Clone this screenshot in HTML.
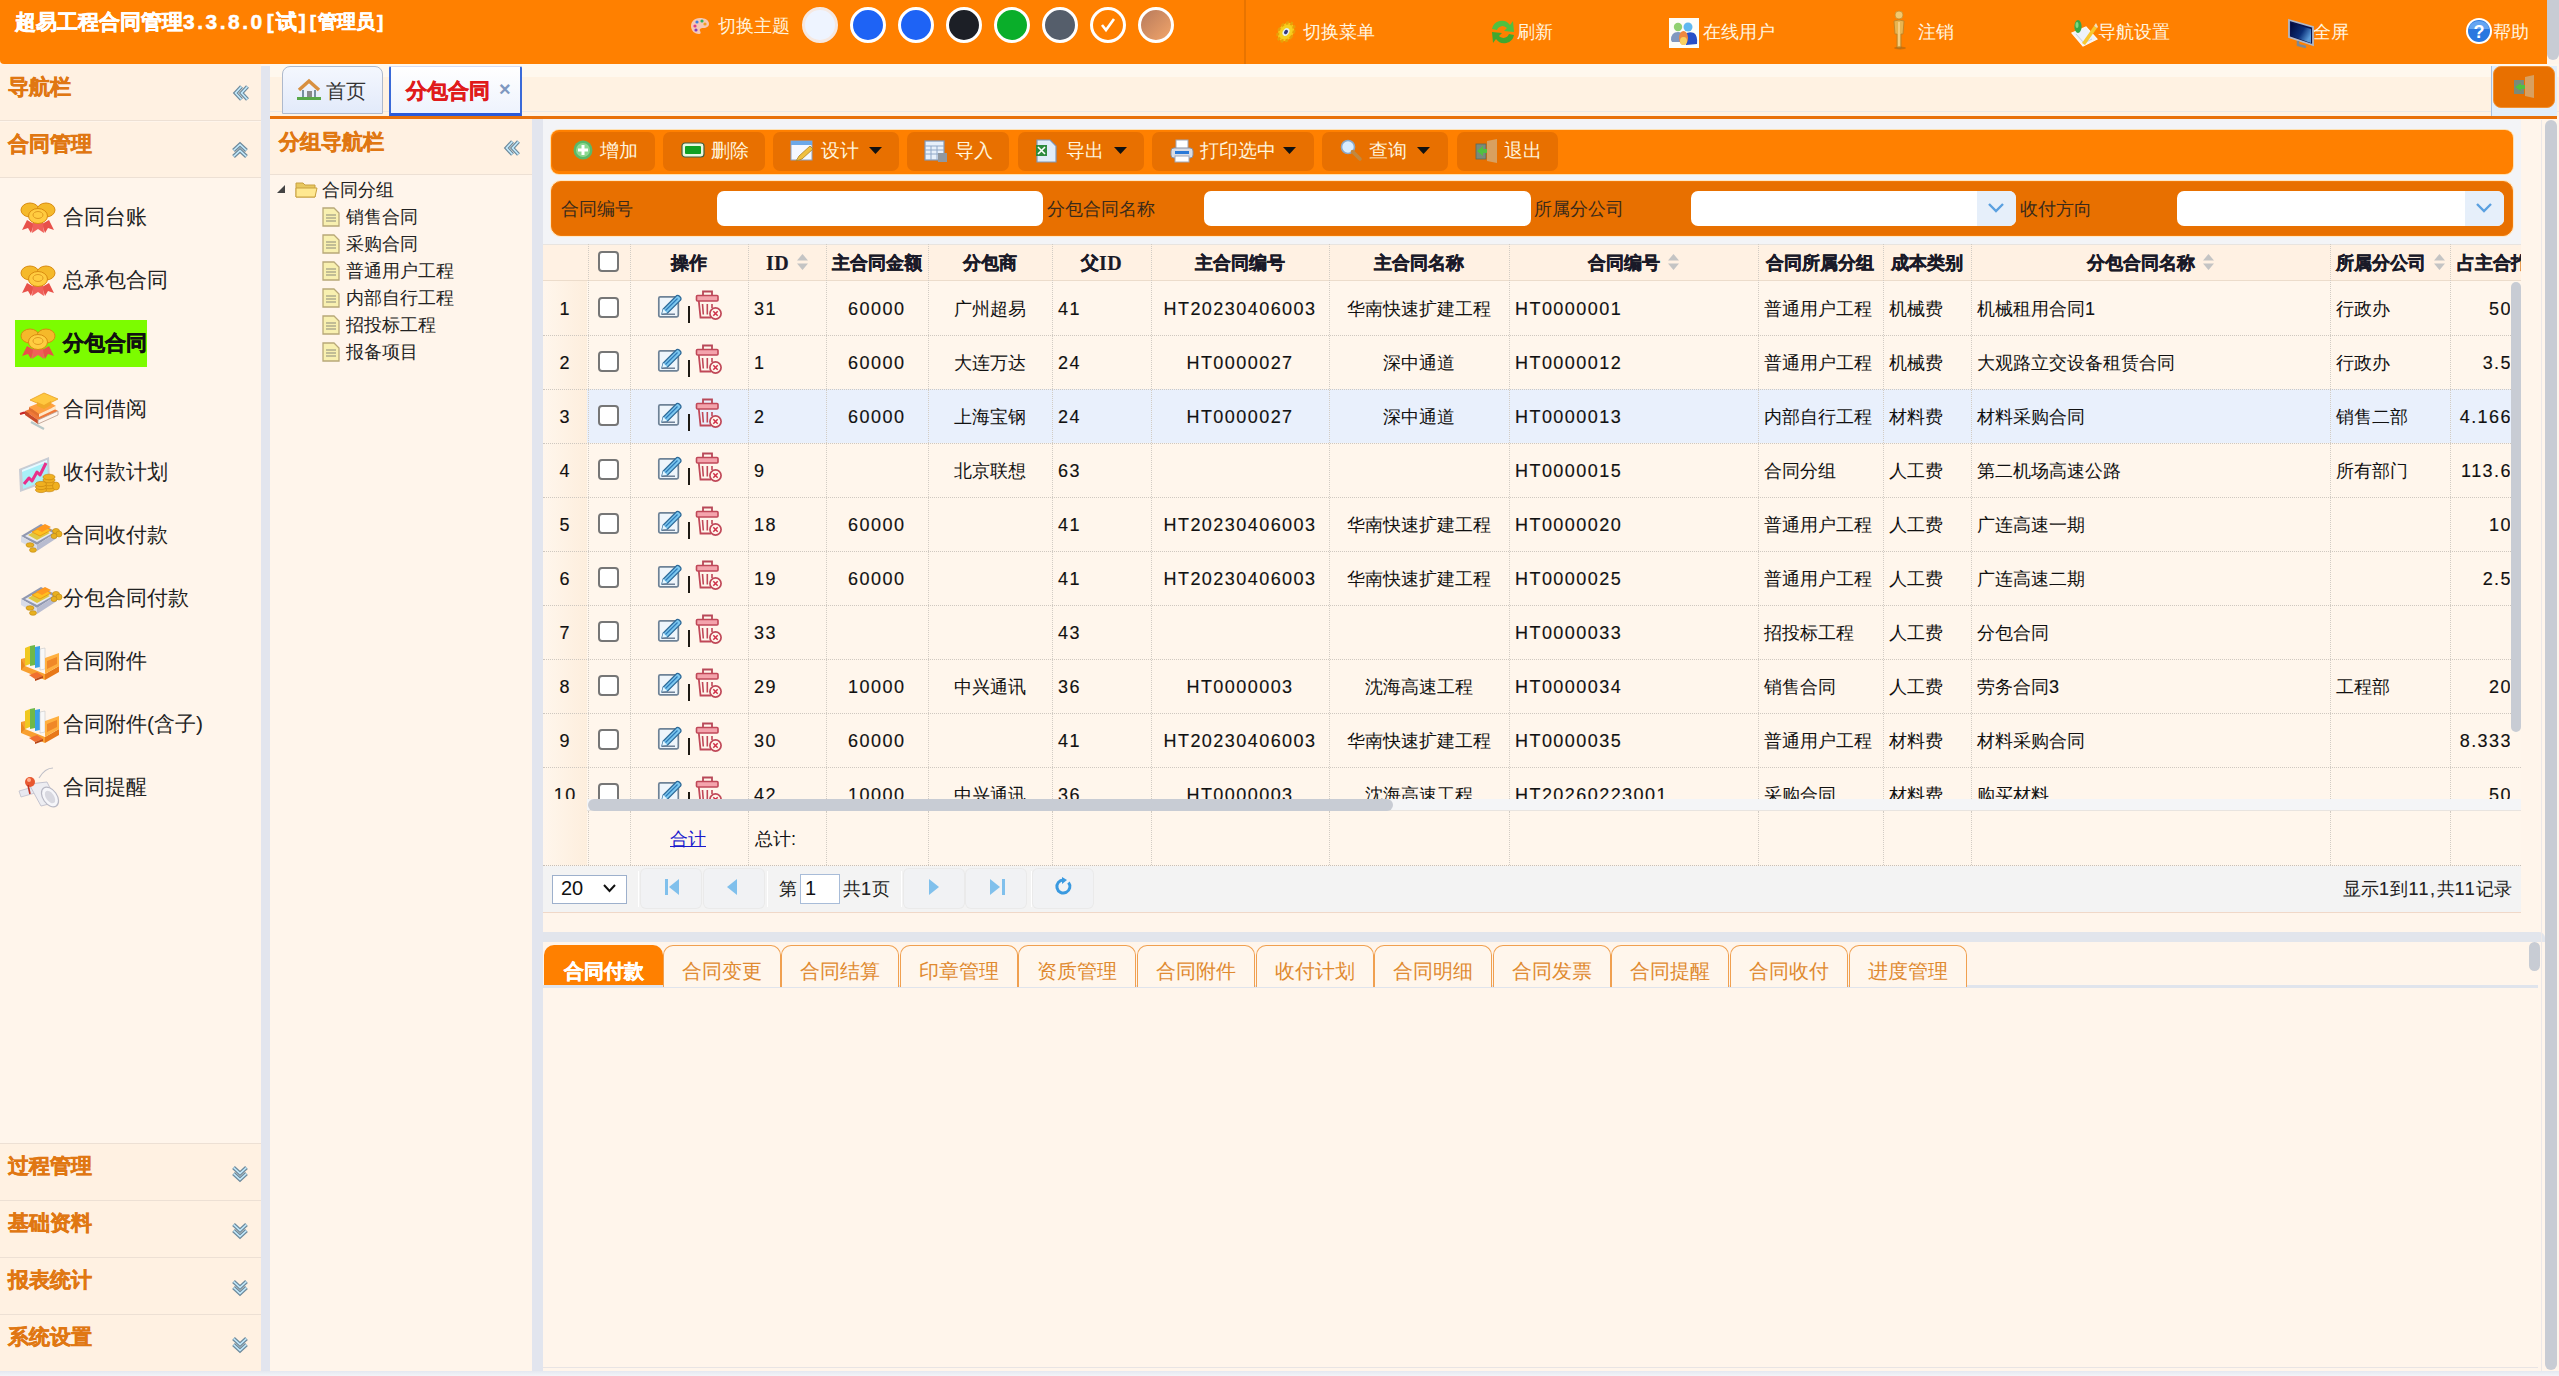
<!DOCTYPE html>
<html><head><meta charset="utf-8">
<style>
*{box-sizing:border-box}
html,body{margin:0;padding:0}
body{width:2559px;height:1376px;overflow:hidden;position:relative;background:#FFF5EB;font-family:"Liberation Sans",sans-serif;font-size:18px;color:#222}
.a{position:absolute}
svg.a{overflow:visible}
#hdr{left:0;top:0;width:2547px;height:64px;background:#FF8000;border-bottom-left-radius:4px}
.title{left:15px;top:8px;color:#fff;font-weight:bold;font-size:21px;white-space:nowrap;-webkit-text-stroke:0.5px #fff}
.title .d{letter-spacing:2.5px}
.title .bk{padding:0 2px}
.title small{font-size:19px;font-weight:bold;position:relative;top:-1px}
.theme{color:#FFF3DD;font-size:18px;white-space:nowrap}
.dot{width:36px;height:36px;border-radius:50%;border:3px solid #fff;top:7px}
.mi{color:#FFF6E0;font-size:18px;top:20px;white-space:nowrap}
.sb{background:#C8CCD4;border-radius:6px}
.split{background:#E2E5EE}
.navh{color:#E07712;font-weight:bold;font-size:21px;white-space:nowrap;-webkit-text-stroke:0.5px #E07712}
.item{font-size:21px;color:#222;white-space:nowrap}
.chk{width:21px;height:21px;border:2px solid #767676;border-radius:4px;background:#fff}
.hd{font-size:18px;font-weight:bold;color:#1A1A28;white-space:nowrap;-webkit-text-stroke:0.4px #1A1A28}
.hd .n{font-family:"Liberation Serif",serif;font-size:20px;letter-spacing:0.5px;position:relative;top:1px}
.td{font-size:18px;color:#111;white-space:nowrap;line-height:22px}
.n{letter-spacing:1.45px;-webkit-text-stroke:0.15px currentColor}
.sort{display:inline-block;margin-left:8px;vertical-align:-1px}

</style></head><body>
<div id="hdr" class="a">
<div class="a title">超易工程合同管理<span class="d">3.3.8.0</span><span class="bk">[</span>试<span class="bk">]</span><small><span class="bk">[</span>管理员<span class="bk">]</span></small></div>
<svg class="a" style="left:690px;top:17px" width="20" height="18" viewBox="0 0 20 18"><path d="M10 1 C4 1 1 5 1 9 C1 14 5 17 9 17 C11 17 11 15 10 14 C9 12 11 11 13 11 C17 11 19 9 19 7 C19 3 15 1 10 1 Z" fill="#F5C9B8"/><circle cx="5" cy="9" r="1.6" fill="#E04080"/><circle cx="7" cy="5" r="1.6" fill="#4080E0"/><circle cx="12" cy="4" r="1.6" fill="#30B060"/><circle cx="15" cy="7" r="1.6" fill="#F0A020"/><circle cx="6" cy="13" r="1.6" fill="#8040C0"/></svg>
<div class="a theme" style="left:718px;top:14px">切换主题</div>
<div class="a dot" style="left:802px;background:#EEF4FF;border-color:#F6E8E0;"></div>
<div class="a dot" style="left:850px;background:#1E63F5;"></div>
<div class="a dot" style="left:898px;background:#1E63F5;"></div>
<div class="a dot" style="left:946px;background:#1C1F26;"></div>
<div class="a dot" style="left:994px;background:#0AAE2A;"></div>
<div class="a dot" style="left:1042px;background:#555E6B;"></div>
<div class="a dot" style="left:1090px;background:#FF8000;"></div>
<div class="a dot" style="left:1138px;background:linear-gradient(135deg,#B77A5C,#F2A56A);"></div>
<svg class="a" style="left:1096px;top:13px" width="24" height="24" viewBox="0 0 24 24"><path d="M6 12 L10 17 L18 6" fill="none" stroke="#fff" stroke-width="2.6"/></svg>
<div class="a" style="left:1244px;top:0;width:2px;height:64px;background:#E87400"></div>
<div class="a mi" style="left:1303px">切换菜单</div>
<svg class="a" style="left:1272px;top:17px" width="28" height="30" viewBox="0 0 28 30"><g transform="translate(14 15) rotate(35) scale(0.72 1)"><circle r="10" fill="#F8C818" stroke="#E8A008" stroke-width="3.5" stroke-dasharray="3.2 2.4"/><circle r="7.5" fill="#F5D020"/><ellipse r="5" fill="#C8D020"/><circle r="4.2" fill="#E8F0F0"/><circle r="2.4" fill="#303880"/></g></svg>
<div class="a mi" style="left:1517px">刷新</div>
<svg class="a" style="left:1488px;top:17px" width="30" height="30" viewBox="0 0 30 30"><path d="M4 12 A10 10 0 0 1 22 8 L25 4 L26 15 L16 14 L19 11 A6 6 0 0 0 9 13 Z" fill="#50C040"/><path d="M26 18 A10 10 0 0 1 8 22 L5 26 L4 15 L14 16 L11 19 A6 6 0 0 0 21 17 Z" fill="#40A830"/></svg>
<div class="a mi" style="left:1703px">在线用户</div>
<svg class="a" style="left:1669px;top:18px" width="30" height="30" viewBox="0 0 30 30"><rect x="0" y="0" width="30" height="30" fill="#FDFDF8"/><circle cx="9" cy="9" r="4.2" fill="#90D070"/><path d="M2 22 Q2 14 9 14 Q13 14 14 17 L13 24 L3 24 Z" fill="#8098C0"/><circle cx="19" cy="9" r="4.5" fill="#60B8F0"/><path d="M16 16 Q20 13 25 15 Q29 18 28 26 L17 27 Z" fill="#2850C8"/><ellipse cx="14.5" cy="20" rx="4.5" ry="7" fill="#F08840"/><ellipse cx="14.5" cy="23" rx="3.5" ry="4" fill="#F8D060"/></svg>
<div class="a mi" style="left:1918px">注销</div>
<svg class="a" style="left:1889px;top:10px" width="22" height="40" viewBox="0 0 22 40"><circle cx="10" cy="5" r="4" fill="#F2C870" stroke="#C89030" stroke-width="0.8"/><path d="M5 11 Q10 9 15 11 L14 24 L12 24 L12 38 L8 38 L8 24 L6 24 Z" fill="#E8B450" stroke="#B88028" stroke-width="0.8"/><path d="M10 12 L10 36" stroke="#FFE0A0" stroke-width="1.2"/><ellipse cx="11" cy="38" rx="6" ry="1.5" fill="#A06010" opacity="0.5"/></svg>
<div class="a mi" style="left:2098px">导航设置</div>
<svg class="a" style="left:2070px;top:18px" width="30" height="30" viewBox="0 0 30 30"><path d="M2 15 L13 28 L27 21 L16 9 Z" fill="#EEF2FA" stroke="#FFF8F0" stroke-width="1.2"/><path d="M6 16 L14 25 L22 21" fill="none" stroke="#C8D0E0" stroke-width="1"/><ellipse cx="8" cy="8.5" rx="3.6" ry="6.5" fill="#38A848"/><ellipse cx="7" cy="7" rx="1.5" ry="3" fill="#80D880"/><path d="M12 25 L24 8 L27 10 L15 27 Z" fill="#F8C830"/><path d="M24 8 L26 5 L28 9 L27 10 Z" fill="#F0E0C0"/></svg>
<div class="a mi" style="left:2313px">全屏</div>
<svg class="a" style="left:2288px;top:19px" width="28" height="30" viewBox="0 0 28 30"><path d="M1 1 L25 8 L25 26 L1 18 Z" fill="#0A1450" stroke="#B0B8C8" stroke-width="1.8"/><path d="M3 4 L23 10 L23 24 L3 17 Z" fill="url(#mg)"/><path d="M10 22 L10 26 L18 28" fill="none" stroke="#808890" stroke-width="2.5"/><defs><linearGradient id="mg" x1="0" y1="0" x2="1" y2="0.6"><stop offset="0" stop-color="#000838"/><stop offset="0.6" stop-color="#0A2E78"/><stop offset="1" stop-color="#5A9AD8"/></linearGradient></defs></svg>
<div class="a mi" style="left:2493px">帮助</div>
<svg class="a" style="left:2465px;top:17px" width="28" height="28" viewBox="0 0 28 28"><circle cx="14" cy="14" r="13" fill="#fff"/><circle cx="14" cy="14" r="11" fill="#2A78E0"/><path d="M14 4 A10 8 0 0 1 24 12 L4 12 A10 8 0 0 1 14 4Z" fill="#7FB8F8" opacity="0.7"/><text x="14" y="21" text-anchor="middle" font-size="18" font-weight="bold" fill="#fff" font-family="Liberation Sans">?</text></svg>
</div>
<div class="a sb" style="left:2547px;top:0;width:12px;height:60px;border-radius:0 0 6px 6px"></div>
<div class="a" style="left:0;top:64px;width:261px;height:1308px;background:#FFF5EB;overflow:hidden">
<div class="a" style="left:0;top:0;width:261px;height:57px;background:#FFF1E2;border-bottom:1px solid #EDE0D4"></div>
<div class="a navh" style="left:8px;top:9px">导航栏</div>
<svg class="a" style="left:233px;top:21px" width="16" height="16" viewBox="0 0 16 16"><path d="M8.5 1.5 L2.5 8 L8.5 14.5 M14.5 1.5 L8.5 8 L14.5 14.5" fill="none" stroke="#6E8A9C" stroke-width="4" stroke-linejoin="miter"/><path d="M8.5 1.5 L2.5 8 L8.5 14.5 M14.5 1.5 L8.5 8 L14.5 14.5" fill="none" stroke="#C4ECFF" stroke-width="1.5"/></svg>
<div class="a" style="left:0;top:58px;width:261px;height:56px;background:#FFF1E2;border-bottom:1px solid #EDE0D4"></div>
<div class="a navh" style="left:8px;top:66px">合同管理</div>
<svg class="a" style="left:232px;top:78px" width="16" height="16" viewBox="0 0 16 16"><path d="M1.5 8.5 L8 2.5 L14.5 8.5 M1.5 14.5 L8 8.5 L14.5 14.5" fill="none" stroke="#6E8A9C" stroke-width="4" stroke-linejoin="miter"/><path d="M1.5 8.5 L8 2.5 L14.5 8.5 M1.5 14.5 L8 8.5 L14.5 14.5" fill="none" stroke="#C4ECFF" stroke-width="1.5"/></svg>
<div class="a item" style="left:63px;top:139px">合同台账</div>
<svg class="a" style="left:19px;top:136px" width="38" height="36" viewBox="0 0 38 36"><path d="M8 20 L3 30 L9 28 L12 33 L15 24 Z" fill="#E8514A"/><path d="M30 20 L35 30 L29 28 L26 33 L23 24 Z" fill="#E8514A"/><path d="M14 22 L13 33 L19 29 L25 33 L24 22 Z" fill="#F0605A"/>
<ellipse cx="11" cy="10" rx="9" ry="7" fill="#F5B92A" stroke="#D98B10" stroke-width="1"/><ellipse cx="27" cy="10" rx="9" ry="7" fill="#F5B92A" stroke="#D98B10" stroke-width="1"/><ellipse cx="19" cy="16" rx="9.5" ry="7.5" fill="#FFCC40" stroke="#D98B10" stroke-width="1"/><ellipse cx="19" cy="15" rx="5" ry="3.5" fill="none" stroke="#E09A20" stroke-width="1"/></svg>
<div class="a item" style="left:63px;top:202px">总承包合同</div>
<svg class="a" style="left:19px;top:199px" width="38" height="36" viewBox="0 0 38 36"><path d="M8 20 L3 30 L9 28 L12 33 L15 24 Z" fill="#E8514A"/><path d="M30 20 L35 30 L29 28 L26 33 L23 24 Z" fill="#E8514A"/><path d="M14 22 L13 33 L19 29 L25 33 L24 22 Z" fill="#F0605A"/>
<ellipse cx="11" cy="10" rx="9" ry="7" fill="#F5B92A" stroke="#D98B10" stroke-width="1"/><ellipse cx="27" cy="10" rx="9" ry="7" fill="#F5B92A" stroke="#D98B10" stroke-width="1"/><ellipse cx="19" cy="16" rx="9.5" ry="7.5" fill="#FFCC40" stroke="#D98B10" stroke-width="1"/><ellipse cx="19" cy="15" rx="5" ry="3.5" fill="none" stroke="#E09A20" stroke-width="1"/></svg>
<div class="a" style="left:15px;top:256px;width:132px;height:47px;background:#7CFC00"></div>
<div class="a item" style="left:63px;top:265px;font-weight:bold;color:#111;-webkit-text-stroke:0.5px #111">分包合同</div>
<svg class="a" style="left:19px;top:262px" width="38" height="36" viewBox="0 0 38 36"><path d="M8 20 L3 30 L9 28 L12 33 L15 24 Z" fill="#E8514A"/><path d="M30 20 L35 30 L29 28 L26 33 L23 24 Z" fill="#E8514A"/><path d="M14 22 L13 33 L19 29 L25 33 L24 22 Z" fill="#F0605A"/>
<ellipse cx="11" cy="10" rx="9" ry="7" fill="#F5B92A" stroke="#D98B10" stroke-width="1"/><ellipse cx="27" cy="10" rx="9" ry="7" fill="#F5B92A" stroke="#D98B10" stroke-width="1"/><ellipse cx="19" cy="16" rx="9.5" ry="7.5" fill="#FFCC40" stroke="#D98B10" stroke-width="1"/><ellipse cx="19" cy="15" rx="5" ry="3.5" fill="none" stroke="#E09A20" stroke-width="1"/></svg>
<div class="a item" style="left:63px;top:331px">合同借阅</div>
<svg class="a" style="left:19px;top:328px" width="38" height="36" viewBox="0 0 38 36"><path d="M12 30 L25 37" stroke="#B8C8C8" stroke-width="2.2"/><path d="M1 22 Q6 20 11 21" stroke="#C82828" stroke-width="2.2" fill="none"/>
<path d="M6 19 L26 11 L39 19 L19 28 Z" fill="#F07838"/><path d="M6 19 L19 28 L19 32 L6 23 Z" fill="#C84A28"/><path d="M19 28 L39 19 L39 23 L19 32 Z" fill="#FFF4EC" stroke="#B89888" stroke-width="0.8"/>
<path d="M10 15 L27 8 L37 14 L20 22 Z" fill="#FFA040"/><path d="M10 15 L20 22 L20 25 L10 18 Z" fill="#E07030"/><path d="M20 22 L37 14 L37 17 L20 25 Z" fill="#FFE8C8"/>
<path d="M11 8 L25 1 L39 7 L25 14 Z" fill="#FFC840" stroke="#E8A020" stroke-width="0.8"/><path d="M18 10 L18 14 L25 17 L32 13 L32 9 L25 13 Z" fill="#F0A828"/></svg>
<div class="a item" style="left:63px;top:394px">收付款计划</div>
<svg class="a" style="left:19px;top:391px" width="38" height="36" viewBox="0 0 38 36"><path d="M0 14 L30 2 L31 26 L1 37 Z" fill="#C8CCD4"/><path d="M3 15 L28 5 L29 24 L4 34 Z" fill="#A8F0F8"/><path d="M3 15 L28 5 L28 7 L3 17 Z" fill="#E8F8FF"/>
<path d="M5 29 L10 23 L13 26 L18 17 L21 20 L27 8" fill="none" stroke="#E8308A" stroke-width="3" stroke-linejoin="round"/>
<g fill="#F0B020" stroke="#C88810" stroke-width="0.7"><ellipse cx="30" cy="34" rx="6" ry="2.8"/><ellipse cx="30" cy="31" rx="6" ry="2.8"/><ellipse cx="30" cy="28" rx="6" ry="2.8"/><ellipse cx="30" cy="25" rx="6" ry="2.8"/><ellipse cx="30" cy="22" rx="6" ry="2.8"/><ellipse cx="22" cy="35" rx="5.5" ry="2.6"/><ellipse cx="22" cy="32" rx="5.5" ry="2.6"/><ellipse cx="22" cy="29" rx="5.5" ry="2.6"/><ellipse cx="37" cy="31" rx="3.5" ry="4"/></g></svg>
<div class="a item" style="left:63px;top:457px">合同收付款</div>
<svg class="a" style="left:19px;top:454px" width="38" height="36" viewBox="0 0 38 36"><path d="M2 18 L22 6 L38 14 L18 27 Z" fill="#9098B0"/><path d="M2 18 L18 27 L18 33 L2 24 Z" fill="#D8DCE8"/><path d="M18 27 L38 14 L38 20 L18 33 Z" fill="#B8BCD0"/>
<path d="M6 18 L22 9 L34 15 L18 24 Z" fill="#E8E8F0"/><path d="M9 17 L22 10 L31 15 L18 22 Z" fill="#E0C840"/><path d="M13 14 L24 8 L32 12 L21 18 Z" fill="#FFC020" stroke="#E89010" stroke-width="0.8"/><path d="M17 11 L26 6 L32 9 L23 14 Z" fill="#FF9820"/>
<g fill="#E8B020" stroke="#C08810" stroke-width="0.6"><ellipse cx="37" cy="13" rx="3.5" ry="2.6"/><ellipse cx="40" cy="16" rx="3" ry="3"/><ellipse cx="35" cy="18" rx="3" ry="2.6"/><ellipse cx="11" cy="27" rx="4" ry="2.3"/><ellipse cx="14" cy="32" rx="3.5" ry="2.3"/></g></svg>
<div class="a item" style="left:63px;top:520px">分包合同付款</div>
<svg class="a" style="left:19px;top:517px" width="38" height="36" viewBox="0 0 38 36"><path d="M2 18 L22 6 L38 14 L18 27 Z" fill="#9098B0"/><path d="M2 18 L18 27 L18 33 L2 24 Z" fill="#D8DCE8"/><path d="M18 27 L38 14 L38 20 L18 33 Z" fill="#B8BCD0"/>
<path d="M6 18 L22 9 L34 15 L18 24 Z" fill="#E8E8F0"/><path d="M9 17 L22 10 L31 15 L18 22 Z" fill="#E0C840"/><path d="M13 14 L24 8 L32 12 L21 18 Z" fill="#FFC020" stroke="#E89010" stroke-width="0.8"/><path d="M17 11 L26 6 L32 9 L23 14 Z" fill="#FF9820"/>
<g fill="#E8B020" stroke="#C08810" stroke-width="0.6"><ellipse cx="37" cy="13" rx="3.5" ry="2.6"/><ellipse cx="40" cy="16" rx="3" ry="3"/><ellipse cx="35" cy="18" rx="3" ry="2.6"/><ellipse cx="11" cy="27" rx="4" ry="2.3"/><ellipse cx="14" cy="32" rx="3.5" ry="2.3"/></g></svg>
<div class="a item" style="left:63px;top:583px">合同附件</div>
<svg class="a" style="left:19px;top:580px" width="38" height="36" viewBox="0 0 38 36"><path d="M6 4 L11 2 L11 20 L6 22 Z" fill="#F0C820"/><path d="M11 2 L16 1 L16 21 L11 22 Z" fill="#70B848"/><path d="M16 3 L21 2 L21 23 L16 24 Z" fill="#38A0E8"/><path d="M21 5 L26 4 L26 25 L21 26 Z" fill="#F8F8F8" stroke="#C8C8C8" stroke-width="0.6"/>
<path d="M2 15 L6 14 L6 22 L26 30 L26 36 L2 26 Z" fill="#F8A030"/><path d="M26 30 L40 22 L40 28 L26 36 Z" fill="#E87818"/><path d="M26 14 L40 9 L40 22 L26 30 Z" fill="#FFB040"/><path d="M28 17 L38 13 L38 20 L28 25 Z" fill="#F08828"/><path d="M2 15 L2 26 L6 22 Z" fill="#E88820"/>
<path d="M10 31 L18 28 L24 32 L16 35 Z" fill="#F07030"/><path d="M16 35 L24 32 L24 34 L16 37 Z" fill="#B84818"/></svg>
<div class="a item" style="left:63px;top:646px">合同附件(含子)</div>
<svg class="a" style="left:19px;top:643px" width="38" height="36" viewBox="0 0 38 36"><path d="M6 4 L11 2 L11 20 L6 22 Z" fill="#F0C820"/><path d="M11 2 L16 1 L16 21 L11 22 Z" fill="#70B848"/><path d="M16 3 L21 2 L21 23 L16 24 Z" fill="#38A0E8"/><path d="M21 5 L26 4 L26 25 L21 26 Z" fill="#F8F8F8" stroke="#C8C8C8" stroke-width="0.6"/>
<path d="M2 15 L6 14 L6 22 L26 30 L26 36 L2 26 Z" fill="#F8A030"/><path d="M26 30 L40 22 L40 28 L26 36 Z" fill="#E87818"/><path d="M26 14 L40 9 L40 22 L26 30 Z" fill="#FFB040"/><path d="M28 17 L38 13 L38 20 L28 25 Z" fill="#F08828"/><path d="M2 15 L2 26 L6 22 Z" fill="#E88820"/>
<path d="M10 31 L18 28 L24 32 L16 35 Z" fill="#F07030"/><path d="M16 35 L24 32 L24 34 L16 37 Z" fill="#B84818"/></svg>
<div class="a item" style="left:63px;top:709px">合同提醒</div>
<svg class="a" style="left:19px;top:706px" width="38" height="36" viewBox="0 0 38 36"><path d="M20 8 Q26 -2 34 -2" fill="none" stroke="#C0C0C8" stroke-width="1.2"/><path d="M0 21 L14 17 L16 23 L2 27 Z" fill="#E8E8F0" stroke="#C0C0CC" stroke-width="0.8"/>
<path d="M10 14 L28 12 L38 32 L22 36 Z" fill="#EDEDF2" stroke="#C4C4D0" stroke-width="1"/><ellipse cx="31" cy="27" rx="7" ry="11" transform="rotate(-35 31 27)" fill="#F6F6FA" stroke="#B8B8C4" stroke-width="1.2"/><ellipse cx="31" cy="27" rx="4" ry="7" transform="rotate(-35 31 27)" fill="#D8D8E0"/>
<circle cx="11" cy="12" r="5" fill="#E85830"/><circle cx="10" cy="10" r="2" fill="#FFB090"/><path d="M9 15 L11 24" stroke="#C03020" stroke-width="1.6"/></svg>
<div class="a" style="left:0;top:1079px;width:261px;height:58px;background:#FFF1E2;border-top:1px solid #EDE0D4;"></div>
<div class="a navh" style="left:8px;top:1088px">过程管理</div>
<svg class="a" style="left:232px;top:1102px" width="16" height="16" viewBox="0 0 16 16"><path d="M1.5 1.5 L8 7.5 L14.5 1.5 M1.5 7.5 L8 13.5 L14.5 7.5" fill="none" stroke="#6E8A9C" stroke-width="4" stroke-linejoin="miter"/><path d="M1.5 1.5 L8 7.5 L14.5 1.5 M1.5 7.5 L8 13.5 L14.5 7.5" fill="none" stroke="#C4ECFF" stroke-width="1.5"/></svg>
<div class="a" style="left:0;top:1136px;width:261px;height:58px;background:#FFF1E2;border-top:1px solid #EDE0D4;"></div>
<div class="a navh" style="left:8px;top:1145px">基础资料</div>
<svg class="a" style="left:232px;top:1159px" width="16" height="16" viewBox="0 0 16 16"><path d="M1.5 1.5 L8 7.5 L14.5 1.5 M1.5 7.5 L8 13.5 L14.5 7.5" fill="none" stroke="#6E8A9C" stroke-width="4" stroke-linejoin="miter"/><path d="M1.5 1.5 L8 7.5 L14.5 1.5 M1.5 7.5 L8 13.5 L14.5 7.5" fill="none" stroke="#C4ECFF" stroke-width="1.5"/></svg>
<div class="a" style="left:0;top:1193px;width:261px;height:58px;background:#FFF1E2;border-top:1px solid #EDE0D4;"></div>
<div class="a navh" style="left:8px;top:1202px">报表统计</div>
<svg class="a" style="left:232px;top:1216px" width="16" height="16" viewBox="0 0 16 16"><path d="M1.5 1.5 L8 7.5 L14.5 1.5 M1.5 7.5 L8 13.5 L14.5 7.5" fill="none" stroke="#6E8A9C" stroke-width="4" stroke-linejoin="miter"/><path d="M1.5 1.5 L8 7.5 L14.5 1.5 M1.5 7.5 L8 13.5 L14.5 7.5" fill="none" stroke="#C4ECFF" stroke-width="1.5"/></svg>
<div class="a" style="left:0;top:1250px;width:261px;height:58px;background:#FFF1E2;border-top:1px solid #EDE0D4;border-bottom:1px solid #E2E2EA;"></div>
<div class="a navh" style="left:8px;top:1259px">系统设置</div>
<svg class="a" style="left:232px;top:1273px" width="16" height="16" viewBox="0 0 16 16"><path d="M1.5 1.5 L8 7.5 L14.5 1.5 M1.5 7.5 L8 13.5 L14.5 7.5" fill="none" stroke="#6E8A9C" stroke-width="4" stroke-linejoin="miter"/><path d="M1.5 1.5 L8 7.5 L14.5 1.5 M1.5 7.5 L8 13.5 L14.5 7.5" fill="none" stroke="#C4ECFF" stroke-width="1.5"/></svg>
</div>
<div class="a split" style="left:261px;top:66px;width:9px;height:1306px"></div>
<div class="a" style="left:270px;top:64px;width:2289px;height:52px;background:linear-gradient(#FFF8EE 0,#FFF8EE 13px,#FFF2E2 13px,#FFF2E2 47px,#ECE8E4 47px,#ECE8E4 48px,#FFF2E2 48px)"></div>
<div class="a" style="left:282px;top:66px;width:101px;height:48px;background:linear-gradient(#F4F7FE,#E2EAFA);border:1px solid #AEB9CC;border-radius:8px 8px 0 0"></div>
<svg class="a" style="left:297px;top:79px" width="24" height="22" viewBox="0 0 24 22"><path d="M2 11 L12 2 L22 11" fill="none" stroke="#D89040" stroke-width="3.5"/><rect x="5" y="11" width="2" height="7" fill="#7890A0"/><rect x="17" y="11" width="2" height="7" fill="#7890A0"/><rect x="10" y="12" width="5" height="8" fill="#8A8A8A"/><rect x="0" y="18" width="24" height="3" fill="#58A848"/></svg>
<div class="a" style="left:326px;top:78px;font-size:20px;color:#333">首页</div>
<div class="a" style="left:389px;top:66px;width:133px;height:50px;background:linear-gradient(#FFFFFF,#EEF3FD);border:2px solid #3A6AD8;border-top:1px solid #D8DCF0;border-bottom:3px solid #2A5AD8;border-radius:2px 2px 0 0"></div>
<div class="a" style="left:406px;top:77px;font-size:21px;color:#E01B1B;font-weight:bold;-webkit-text-stroke:0.5px #E01B1B">分包合同</div>
<div class="a" style="left:499px;top:78px;font-size:20px;color:#7F98C0;font-weight:bold">×</div>
<div class="a" style="left:2491px;top:66px;width:66px;height:50px;background:#E2EEFA;border-left:1px solid #A8C0E0"></div>
<div class="a" style="left:2493px;top:66px;width:62px;height:42px;background:#E87000;border-radius:8px;border:1px solid #F29030"></div>
<svg class="a" style="left:2513px;top:75px" width="24" height="24" viewBox="0 0 24 24"><rect x="1" y="5" width="10" height="14" fill="#7A8A7A"/><path d="M12 2 L21 0 L21 23 L12 21 Z" fill="#D8A060"/><path d="M2 12 L8 8 L8 10 L12 10 L12 14 L8 14 L8 16 Z" fill="#50C040"/></svg>
<div class="a" style="left:270px;top:116px;width:2287px;height:3px;background:#E8710A"></div>
<div class="a" style="left:270px;top:119px;width:262px;height:1253px;background:#FFF5EB"></div>
<div class="a" style="left:270px;top:119px;width:262px;height:56px;background:#FFF1E2;border-bottom:1px solid #EDE0D4"></div>
<div class="a navh" style="left:279px;top:128px">分组导航栏</div>
<svg class="a" style="left:504px;top:140px" width="16" height="16" viewBox="0 0 16 16"><path d="M8.5 1.5 L2.5 8 L8.5 14.5 M14.5 1.5 L8.5 8 L14.5 14.5" fill="none" stroke="#6E8A9C" stroke-width="4" stroke-linejoin="miter"/><path d="M8.5 1.5 L2.5 8 L8.5 14.5 M14.5 1.5 L8.5 8 L14.5 14.5" fill="none" stroke="#C4ECFF" stroke-width="1.5"/></svg>
<svg class="a" style="left:277px;top:185px" width="9" height="9" viewBox="0 0 9 9"><path d="M8 0 L8 8 L0 8 Z" fill="#444"/></svg>
<svg class="a" style="left:295px;top:180px" width="23" height="19" viewBox="0 0 23 19"><path d="M1 3 L8 3 L10 5 L20 5 L20 17 L1 17 Z" fill="#E8C860" stroke="#C8A040" stroke-width="1"/><path d="M1 8 L22 8 L20 17 L1 17 Z" fill="#FFE890" stroke="#C8A040" stroke-width="1"/></svg>
<div class="a" style="left:322px;top:178px;font-size:18px;color:#222">合同分组</div>
<svg class="a" style="left:322px;top:207px" width="18" height="20" viewBox="0 0 18 20"><path d="M1 1 L12 1 L17 6 L17 19 L1 19 Z" fill="#F8F0B0" stroke="#B8A878" stroke-width="1.3"/><path d="M4 8 H14 M4 11 H14 M4 14 H14" stroke="#8A8A7A" stroke-width="1.2"/></svg>
<div class="a" style="left:346px;top:205px;font-size:18px;color:#222;white-space:nowrap">销售合同</div>
<svg class="a" style="left:322px;top:234px" width="18" height="20" viewBox="0 0 18 20"><path d="M1 1 L12 1 L17 6 L17 19 L1 19 Z" fill="#F8F0B0" stroke="#B8A878" stroke-width="1.3"/><path d="M4 8 H14 M4 11 H14 M4 14 H14" stroke="#8A8A7A" stroke-width="1.2"/></svg>
<div class="a" style="left:346px;top:232px;font-size:18px;color:#222;white-space:nowrap">采购合同</div>
<svg class="a" style="left:322px;top:261px" width="18" height="20" viewBox="0 0 18 20"><path d="M1 1 L12 1 L17 6 L17 19 L1 19 Z" fill="#F8F0B0" stroke="#B8A878" stroke-width="1.3"/><path d="M4 8 H14 M4 11 H14 M4 14 H14" stroke="#8A8A7A" stroke-width="1.2"/></svg>
<div class="a" style="left:346px;top:259px;font-size:18px;color:#222;white-space:nowrap">普通用户工程</div>
<svg class="a" style="left:322px;top:288px" width="18" height="20" viewBox="0 0 18 20"><path d="M1 1 L12 1 L17 6 L17 19 L1 19 Z" fill="#F8F0B0" stroke="#B8A878" stroke-width="1.3"/><path d="M4 8 H14 M4 11 H14 M4 14 H14" stroke="#8A8A7A" stroke-width="1.2"/></svg>
<div class="a" style="left:346px;top:286px;font-size:18px;color:#222;white-space:nowrap">内部自行工程</div>
<svg class="a" style="left:322px;top:315px" width="18" height="20" viewBox="0 0 18 20"><path d="M1 1 L12 1 L17 6 L17 19 L1 19 Z" fill="#F8F0B0" stroke="#B8A878" stroke-width="1.3"/><path d="M4 8 H14 M4 11 H14 M4 14 H14" stroke="#8A8A7A" stroke-width="1.2"/></svg>
<div class="a" style="left:346px;top:313px;font-size:18px;color:#222;white-space:nowrap">招投标工程</div>
<svg class="a" style="left:322px;top:342px" width="18" height="20" viewBox="0 0 18 20"><path d="M1 1 L12 1 L17 6 L17 19 L1 19 Z" fill="#F8F0B0" stroke="#B8A878" stroke-width="1.3"/><path d="M4 8 H14 M4 11 H14 M4 14 H14" stroke="#8A8A7A" stroke-width="1.2"/></svg>
<div class="a" style="left:346px;top:340px;font-size:18px;color:#222;white-space:nowrap">报备项目</div>
<div class="a split" style="left:532px;top:119px;width:11px;height:1253px"></div>
<div class="a" style="left:543px;top:119px;width:2002px;height:1253px;background:#FFF5EB"></div>
<div class="a" style="left:543px;top:119px;width:1978px;height:125px;background:#F3F4F7"></div>
<div class="a" style="left:551px;top:130px;width:1962px;height:44px;background:#FF8000;border-radius:8px;box-shadow:0 0 0 1px #FFE0B0"></div>
<div class="a" style="left:552px;top:132px;width:103px;height:39px;background:#E87000;border-radius:7px"></div>
<svg class="a" style="left:573px;top:140px" width="20" height="20" viewBox="0 0 20 20"><circle cx="10" cy="10" r="9.5" fill="#5AB868"/><circle cx="10" cy="10" r="7" fill="#8CD890"/><path d="M10 5 V15 M5 10 H15" stroke="#fff" stroke-width="3"/></svg>
<div class="a" style="left:600px;top:138px;font-size:19px;color:#FFF4DC;white-space:nowrap">增加</div>
<div class="a" style="left:663px;top:132px;width:102px;height:39px;background:#E87000;border-radius:7px"></div>
<svg class="a" style="left:681px;top:142px" width="24" height="16" viewBox="0 0 24 16"><rect x="1" y="1" width="22" height="14" rx="3" fill="#E8F8E0" stroke="#406040" stroke-width="1.2"/><rect x="4" y="4" width="16" height="8" rx="1" fill="#10A020"/></svg>
<div class="a" style="left:711px;top:138px;font-size:19px;color:#FFF4DC;white-space:nowrap">删除</div>
<div class="a" style="left:773px;top:132px;width:126px;height:39px;background:#E87000;border-radius:7px"></div>
<svg class="a" style="left:790px;top:140px" width="24" height="22" viewBox="0 0 24 22"><rect x="1" y="1" width="21" height="19" fill="#F4F8FF" stroke="#8AA0C0" stroke-width="1"/><rect x="1" y="1" width="21" height="4" fill="#6AA8E8"/><path d="M6 21 L9 16 L20 6 L23 9 L12 19 Z" fill="#F0C040" stroke="#B08020" stroke-width="0.8"/></svg>
<div class="a" style="left:821px;top:138px;font-size:19px;color:#FFF4DC;white-space:nowrap">设计</div>
<svg class="a" style="left:869px;top:147px" width="13" height="7" viewBox="0 0 13 7"><path d="M0 0 H13 L6.5 7 Z" fill="#111"/></svg>
<div class="a" style="left:907px;top:132px;width:102px;height:39px;background:#E87000;border-radius:7px"></div>
<svg class="a" style="left:924px;top:140px" width="24" height="22" viewBox="0 0 24 22"><rect x="1" y="1" width="19" height="19" fill="#E8F0FA" stroke="#8098B8" stroke-width="1.2"/><path d="M1 6 H20 M1 10 H20 M1 14 H20 M7 6 V20 M13 6 V20" stroke="#90A8C8" stroke-width="1"/><rect x="14" y="13" width="9" height="9" fill="#9098A0"/></svg>
<div class="a" style="left:955px;top:138px;font-size:19px;color:#FFF4DC;white-space:nowrap">导入</div>
<div class="a" style="left:1018px;top:132px;width:126px;height:39px;background:#E87000;border-radius:7px"></div>
<svg class="a" style="left:1035px;top:139px" width="22" height="24" viewBox="0 0 22 24"><path d="M2 1 L15 1 L21 7 L21 23 L2 23 Z" fill="#E0ECF8" stroke="#8098B8" stroke-width="1.2"/><path d="M1 6 L12 6 L12 17 L1 17 Z" fill="#2E8B3E"/><path d="M3 8 L10 15 M10 8 L3 15" stroke="#fff" stroke-width="1.6"/></svg>
<div class="a" style="left:1066px;top:138px;font-size:19px;color:#FFF4DC;white-space:nowrap">导出</div>
<svg class="a" style="left:1114px;top:147px" width="13" height="7" viewBox="0 0 13 7"><path d="M0 0 H13 L6.5 7 Z" fill="#111"/></svg>
<div class="a" style="left:1152px;top:132px;width:162px;height:39px;background:#E87000;border-radius:7px"></div>
<svg class="a" style="left:1170px;top:139px" width="24" height="24" viewBox="0 0 24 24"><rect x="6" y="1" width="12" height="9" fill="#fff" stroke="#A0A8B8" stroke-width="1"/><rect x="1" y="9" width="22" height="10" rx="3" fill="#D8DCE6" stroke="#8890A0" stroke-width="1"/><rect x="5" y="12" width="14" height="3" fill="#2A7AD8"/><rect x="5" y="17" width="14" height="6" fill="#fff" stroke="#A0A8B8" stroke-width="1"/></svg>
<div class="a" style="left:1200px;top:138px;font-size:19px;color:#FFF4DC;white-space:nowrap">打印选中</div>
<svg class="a" style="left:1283px;top:147px" width="13" height="7" viewBox="0 0 13 7"><path d="M0 0 H13 L6.5 7 Z" fill="#111"/></svg>
<div class="a" style="left:1322px;top:132px;width:126px;height:39px;background:#E87000;border-radius:7px"></div>
<svg class="a" style="left:1340px;top:139px" width="22" height="22" viewBox="0 0 22 22"><circle cx="8" cy="8" r="6.5" fill="#D8ECFF" stroke="#8AA8C8" stroke-width="1.6"/><path d="M12.5 12.5 L20 20" stroke="#C08840" stroke-width="3.5" stroke-linecap="round"/></svg>
<div class="a" style="left:1369px;top:138px;font-size:19px;color:#FFF4DC;white-space:nowrap">查询</div>
<svg class="a" style="left:1417px;top:147px" width="13" height="7" viewBox="0 0 13 7"><path d="M0 0 H13 L6.5 7 Z" fill="#111"/></svg>
<div class="a" style="left:1457px;top:132px;width:101px;height:39px;background:#E87000;border-radius:7px"></div>
<svg class="a" style="left:1475px;top:139px" width="24" height="24" viewBox="0 0 24 24"><rect x="1" y="5" width="10" height="15" fill="#7A8A7A" stroke="#5A6A5A" stroke-width="0.8"/><path d="M12 2 L22 0 L22 24 L12 22 Z" fill="#D8A060"/><path d="M2 12 L8 7 L8 10 L12 10 L12 14 L8 14 L8 17 Z" fill="#50C040"/></svg>
<div class="a" style="left:1504px;top:138px;font-size:19px;color:#FFF4DC;white-space:nowrap">退出</div>
<div class="a" style="left:551px;top:181px;width:1962px;height:55px;background:#E87000;border-radius:10px;border:1px solid #F07A08;box-shadow:0 0 0 1px #FFE8C8"></div>
<div class="a" style="left:561px;top:197px;font-size:18px;color:#3A2A1A;white-space:nowrap">合同编号</div>
<div class="a" style="left:717px;top:191px;width:326px;height:35px;background:#fff;border-radius:7px;overflow:hidden"></div>
<div class="a" style="left:1047px;top:197px;font-size:18px;color:#3A2A1A;white-space:nowrap">分包合同名称</div>
<div class="a" style="left:1204px;top:191px;width:327px;height:35px;background:#fff;border-radius:7px;overflow:hidden"></div>
<div class="a" style="left:1534px;top:197px;font-size:18px;color:#3A2A1A;white-space:nowrap">所属分公司</div>
<div class="a" style="left:1691px;top:191px;width:325px;height:35px;background:#fff;border-radius:7px;overflow:hidden"><div class="a" style="right:0;top:0;width:39px;height:35px;background:#E6EFFA"></div></div>
<svg class="a" style="left:1988px;top:203px" width="16" height="10" viewBox="0 0 16 10"><path d="M1 1 L8 8 L15 1" fill="none" stroke="#5AA0E0" stroke-width="2.4"/></svg>
<div class="a" style="left:2020px;top:197px;font-size:18px;color:#3A2A1A;white-space:nowrap">收付方向</div>
<div class="a" style="left:2177px;top:191px;width:327px;height:35px;background:#fff;border-radius:7px;overflow:hidden"><div class="a" style="right:0;top:0;width:39px;height:35px;background:#E6EFFA"></div></div>
<svg class="a" style="left:2476px;top:203px" width="16" height="10" viewBox="0 0 16 10"><path d="M1 1 L8 8 L15 1" fill="none" stroke="#5AA0E0" stroke-width="2.4"/></svg>
<div class="a" style="left:543px;top:244px;width:1978px;height:37px;background:#FFF1E3;border-top:1px solid #E8E4E0;border-bottom:1px solid #ECDCCB"></div>
<div class="a" style="left:543px;top:281px;width:1978px;height:518px;background:#FFF6EC;overflow:hidden"></div>
<div class="a" style="left:543px;top:281px;width:44px;height:584px;background:linear-gradient(90deg,#FFF6EC,#FDEEDD)"></div>
<div class="a" style="left:587px;top:389px;width:1934px;height:54px;background:#E9F0FC"></div>
<div class="a" style="left:543px;top:335px;width:1978px;height:0;border-top:1px dotted #CFC8C0"></div>
<div class="a" style="left:543px;top:389px;width:1978px;height:0;border-top:1px dotted #CFC8C0"></div>
<div class="a" style="left:543px;top:443px;width:1978px;height:0;border-top:1px dotted #CFC8C0"></div>
<div class="a" style="left:543px;top:497px;width:1978px;height:0;border-top:1px dotted #CFC8C0"></div>
<div class="a" style="left:543px;top:551px;width:1978px;height:0;border-top:1px dotted #CFC8C0"></div>
<div class="a" style="left:543px;top:605px;width:1978px;height:0;border-top:1px dotted #CFC8C0"></div>
<div class="a" style="left:543px;top:659px;width:1978px;height:0;border-top:1px dotted #CFC8C0"></div>
<div class="a" style="left:543px;top:713px;width:1978px;height:0;border-top:1px dotted #CFC8C0"></div>
<div class="a" style="left:543px;top:767px;width:1978px;height:0;border-top:1px dotted #CFC8C0"></div>
<div class="a" style="left:587.5px;top:244px;width:0;height:621px;border-left:1px dotted #D2CCC4"></div>
<div class="a" style="left:629.5px;top:244px;width:0;height:621px;border-left:1px dotted #D2CCC4"></div>
<div class="a" style="left:748px;top:244px;width:0;height:621px;border-left:1px dotted #D2CCC4"></div>
<div class="a" style="left:826px;top:244px;width:0;height:621px;border-left:1px dotted #D2CCC4"></div>
<div class="a" style="left:927.5px;top:244px;width:0;height:621px;border-left:1px dotted #D2CCC4"></div>
<div class="a" style="left:1052px;top:244px;width:0;height:621px;border-left:1px dotted #D2CCC4"></div>
<div class="a" style="left:1151px;top:244px;width:0;height:621px;border-left:1px dotted #D2CCC4"></div>
<div class="a" style="left:1329px;top:244px;width:0;height:621px;border-left:1px dotted #D2CCC4"></div>
<div class="a" style="left:1509px;top:244px;width:0;height:621px;border-left:1px dotted #D2CCC4"></div>
<div class="a" style="left:1757.5px;top:244px;width:0;height:621px;border-left:1px dotted #D2CCC4"></div>
<div class="a" style="left:1883px;top:244px;width:0;height:621px;border-left:1px dotted #D2CCC4"></div>
<div class="a" style="left:1971px;top:244px;width:0;height:621px;border-left:1px dotted #D2CCC4"></div>
<div class="a" style="left:2330px;top:244px;width:0;height:621px;border-left:1px dotted #D2CCC4"></div>
<div class="a" style="left:2450px;top:244px;width:0;height:621px;border-left:1px dotted #D2CCC4"></div>
<div class="a chk" style="left:598.0px;top:251px"></div>
<div class="a hd" style="left:629.5px;top:251px;width:118.5px;text-align:center">操作</div>
<div class="a hd" style="left:748px;top:251px;width:78px;text-align:center"><span class="n">ID</span><svg class="sort" width="11" height="16" viewBox="0 0 11 16"><path d="M5.5 0 L11 6.5 L0 6.5 Z M0 9.5 L11 9.5 L5.5 16 Z" fill="#C4C4C4"/></svg></div>
<div class="a hd" style="left:826px;top:251px;width:101.5px;text-align:center">主合同金额</div>
<div class="a hd" style="left:927.5px;top:251px;width:124.5px;text-align:center">分包商</div>
<div class="a hd" style="left:1052px;top:251px;width:99px;text-align:center">父<span class="n">ID</span></div>
<div class="a hd" style="left:1151px;top:251px;width:178px;text-align:center">主合同编号</div>
<div class="a hd" style="left:1329px;top:251px;width:180px;text-align:center">主合同名称</div>
<div class="a hd" style="left:1509px;top:251px;width:248.5px;text-align:center">合同编号<svg class="sort" width="11" height="16" viewBox="0 0 11 16"><path d="M5.5 0 L11 6.5 L0 6.5 Z M0 9.5 L11 9.5 L5.5 16 Z" fill="#C4C4C4"/></svg></div>
<div class="a hd" style="left:1757.5px;top:251px;width:125.5px;text-align:center">合同所属分组</div>
<div class="a hd" style="left:1883px;top:251px;width:88px;text-align:center">成本类别</div>
<div class="a hd" style="left:1971px;top:251px;width:359px;text-align:center">分包合同名称<svg class="sort" width="11" height="16" viewBox="0 0 11 16"><path d="M5.5 0 L11 6.5 L0 6.5 Z M0 9.5 L11 9.5 L5.5 16 Z" fill="#C4C4C4"/></svg></div>
<div class="a hd" style="left:2330px;top:251px;width:120px;text-align:center">所属分公司<svg class="sort" width="11" height="16" viewBox="0 0 11 16"><path d="M5.5 0 L11 6.5 L0 6.5 Z M0 9.5 L11 9.5 L5.5 16 Z" fill="#C4C4C4"/></svg></div>
<div class="a hd" style="left:2457px;top:251px;width:64px;overflow:hidden">占主合拃</div>
<div class="a" style="left:543px;top:281px;width:1967px;height:54px;overflow:hidden">
<div class="a td" style="left:0px;top:17px;width:44.5px;text-align:center;"><span class="n">1</span></div>
<div class="a chk" style="left:55.0px;top:16px"></div>
<svg class="a" style="left:113px;top:10px" width="28" height="26" viewBox="0 0 28 26"><rect x="2.8" y="5.8" width="19.5" height="20" rx="1.5" fill="#EEF5FB" stroke="#6E8296" stroke-width="1.7"/><path d="M6 23 L7.2 18 L20 5.2 A2.2 2.2 0 0 1 23.2 5 L24.4 6.2 A2.2 2.2 0 0 1 24.2 9.4 L11.4 22.2 Z" fill="#7CC8F0" stroke="#2E6A98" stroke-width="1.3"/><path d="M9.5 19.5 L21.5 7.5" stroke="#2E7AB8" stroke-width="1.2"/><path d="M6 23 L7.2 18 L11.4 22.2 Z" fill="#E4F6FF"/><path d="M6 23.2 H19" stroke="#5A7088" stroke-width="1.3"/></svg>
<div class="a" style="left:145px;top:25px;width:2px;height:17px;background:#1E1A14"></div>
<svg class="a" style="left:152px;top:8px" width="30" height="32" viewBox="0 0 30 32"><path d="M8 6 V2.5 H17 V6" fill="none" stroke="#B84858" stroke-width="1.8"/><rect x="1.5" y="6.5" width="21.5" height="5.5" rx="1" fill="#F4A4AC" stroke="#C04858" stroke-width="1.6"/><path d="M3.8 12 L5.5 28.5 H16" fill="none" stroke="#C04858" stroke-width="1.8"/><path d="M7.5 15 L8.3 25.5 M12.3 15 V25.5 M17 15 V19" stroke="#C04858" stroke-width="1.6"/><circle cx="20.5" cy="24.5" r="5.6" fill="#FFF6EC" stroke="#C04858" stroke-width="1.7"/><path d="M18.3 22.3 L22.7 26.7 M22.7 22.3 L18.3 26.7" stroke="#D03048" stroke-width="1.5"/></svg>
<div class="a td" style="left:211px;top:17px;"><span class="n">31</span></div>
<div class="a td" style="left:283px;top:17px;width:101.5px;text-align:center;"><span class="n">60000</span></div>
<div class="a td" style="left:384.5px;top:17px;width:124.5px;text-align:center;">广州超易</div>
<div class="a td" style="left:515px;top:17px;"><span class="n">41</span></div>
<div class="a td" style="left:608px;top:17px;width:178px;text-align:center;"><span class="n">HT20230406003</span></div>
<div class="a td" style="left:786px;top:17px;width:180px;text-align:center;">华南快速扩建工程</div>
<div class="a td" style="left:972px;top:17px;"><span class="n">HT0000001</span></div>
<div class="a td" style="left:1220.5px;top:17px;">普通用户工程</div>
<div class="a td" style="left:1346px;top:17px;">机械费</div>
<div class="a td" style="left:1434px;top:17px;">机械租用合同<span class="n">1</span></div>
<div class="a td" style="left:1793px;top:17px;">行政办</div>
<div class="a td" style="left:1907px;top:17px;width:62px;text-align:right;"><span class="n">50</span></div>
</div>
<div class="a" style="left:543px;top:335px;width:1967px;height:54px;overflow:hidden">
<div class="a td" style="left:0px;top:17px;width:44.5px;text-align:center;"><span class="n">2</span></div>
<div class="a chk" style="left:55.0px;top:16px"></div>
<svg class="a" style="left:113px;top:10px" width="28" height="26" viewBox="0 0 28 26"><rect x="2.8" y="5.8" width="19.5" height="20" rx="1.5" fill="#EEF5FB" stroke="#6E8296" stroke-width="1.7"/><path d="M6 23 L7.2 18 L20 5.2 A2.2 2.2 0 0 1 23.2 5 L24.4 6.2 A2.2 2.2 0 0 1 24.2 9.4 L11.4 22.2 Z" fill="#7CC8F0" stroke="#2E6A98" stroke-width="1.3"/><path d="M9.5 19.5 L21.5 7.5" stroke="#2E7AB8" stroke-width="1.2"/><path d="M6 23 L7.2 18 L11.4 22.2 Z" fill="#E4F6FF"/><path d="M6 23.2 H19" stroke="#5A7088" stroke-width="1.3"/></svg>
<div class="a" style="left:145px;top:25px;width:2px;height:17px;background:#1E1A14"></div>
<svg class="a" style="left:152px;top:8px" width="30" height="32" viewBox="0 0 30 32"><path d="M8 6 V2.5 H17 V6" fill="none" stroke="#B84858" stroke-width="1.8"/><rect x="1.5" y="6.5" width="21.5" height="5.5" rx="1" fill="#F4A4AC" stroke="#C04858" stroke-width="1.6"/><path d="M3.8 12 L5.5 28.5 H16" fill="none" stroke="#C04858" stroke-width="1.8"/><path d="M7.5 15 L8.3 25.5 M12.3 15 V25.5 M17 15 V19" stroke="#C04858" stroke-width="1.6"/><circle cx="20.5" cy="24.5" r="5.6" fill="#FFF6EC" stroke="#C04858" stroke-width="1.7"/><path d="M18.3 22.3 L22.7 26.7 M22.7 22.3 L18.3 26.7" stroke="#D03048" stroke-width="1.5"/></svg>
<div class="a td" style="left:211px;top:17px;"><span class="n">1</span></div>
<div class="a td" style="left:283px;top:17px;width:101.5px;text-align:center;"><span class="n">60000</span></div>
<div class="a td" style="left:384.5px;top:17px;width:124.5px;text-align:center;">大连万达</div>
<div class="a td" style="left:515px;top:17px;"><span class="n">24</span></div>
<div class="a td" style="left:608px;top:17px;width:178px;text-align:center;"><span class="n">HT0000027</span></div>
<div class="a td" style="left:786px;top:17px;width:180px;text-align:center;">深中通道</div>
<div class="a td" style="left:972px;top:17px;"><span class="n">HT0000012</span></div>
<div class="a td" style="left:1220.5px;top:17px;">普通用户工程</div>
<div class="a td" style="left:1346px;top:17px;">机械费</div>
<div class="a td" style="left:1434px;top:17px;">大观路立交设备租赁合同</div>
<div class="a td" style="left:1793px;top:17px;">行政办</div>
<div class="a td" style="left:1907px;top:17px;width:62px;text-align:right;"><span class="n">3.5</span></div>
</div>
<div class="a" style="left:543px;top:389px;width:1967px;height:54px;overflow:hidden">
<div class="a td" style="left:0px;top:17px;width:44.5px;text-align:center;"><span class="n">3</span></div>
<div class="a chk" style="left:55.0px;top:16px"></div>
<svg class="a" style="left:113px;top:10px" width="28" height="26" viewBox="0 0 28 26"><rect x="2.8" y="5.8" width="19.5" height="20" rx="1.5" fill="#EEF5FB" stroke="#6E8296" stroke-width="1.7"/><path d="M6 23 L7.2 18 L20 5.2 A2.2 2.2 0 0 1 23.2 5 L24.4 6.2 A2.2 2.2 0 0 1 24.2 9.4 L11.4 22.2 Z" fill="#7CC8F0" stroke="#2E6A98" stroke-width="1.3"/><path d="M9.5 19.5 L21.5 7.5" stroke="#2E7AB8" stroke-width="1.2"/><path d="M6 23 L7.2 18 L11.4 22.2 Z" fill="#E4F6FF"/><path d="M6 23.2 H19" stroke="#5A7088" stroke-width="1.3"/></svg>
<div class="a" style="left:145px;top:25px;width:2px;height:17px;background:#1E1A14"></div>
<svg class="a" style="left:152px;top:8px" width="30" height="32" viewBox="0 0 30 32"><path d="M8 6 V2.5 H17 V6" fill="none" stroke="#B84858" stroke-width="1.8"/><rect x="1.5" y="6.5" width="21.5" height="5.5" rx="1" fill="#F4A4AC" stroke="#C04858" stroke-width="1.6"/><path d="M3.8 12 L5.5 28.5 H16" fill="none" stroke="#C04858" stroke-width="1.8"/><path d="M7.5 15 L8.3 25.5 M12.3 15 V25.5 M17 15 V19" stroke="#C04858" stroke-width="1.6"/><circle cx="20.5" cy="24.5" r="5.6" fill="#FFF6EC" stroke="#C04858" stroke-width="1.7"/><path d="M18.3 22.3 L22.7 26.7 M22.7 22.3 L18.3 26.7" stroke="#D03048" stroke-width="1.5"/></svg>
<div class="a td" style="left:211px;top:17px;"><span class="n">2</span></div>
<div class="a td" style="left:283px;top:17px;width:101.5px;text-align:center;"><span class="n">60000</span></div>
<div class="a td" style="left:384.5px;top:17px;width:124.5px;text-align:center;">上海宝钢</div>
<div class="a td" style="left:515px;top:17px;"><span class="n">24</span></div>
<div class="a td" style="left:608px;top:17px;width:178px;text-align:center;"><span class="n">HT0000027</span></div>
<div class="a td" style="left:786px;top:17px;width:180px;text-align:center;">深中通道</div>
<div class="a td" style="left:972px;top:17px;"><span class="n">HT0000013</span></div>
<div class="a td" style="left:1220.5px;top:17px;">内部自行工程</div>
<div class="a td" style="left:1346px;top:17px;">材料费</div>
<div class="a td" style="left:1434px;top:17px;">材料采购合同</div>
<div class="a td" style="left:1793px;top:17px;">销售二部</div>
<div class="a td" style="left:1907px;top:17px;width:62px;text-align:right;"><span class="n">4.166</span></div>
</div>
<div class="a" style="left:543px;top:443px;width:1967px;height:54px;overflow:hidden">
<div class="a td" style="left:0px;top:17px;width:44.5px;text-align:center;"><span class="n">4</span></div>
<div class="a chk" style="left:55.0px;top:16px"></div>
<svg class="a" style="left:113px;top:10px" width="28" height="26" viewBox="0 0 28 26"><rect x="2.8" y="5.8" width="19.5" height="20" rx="1.5" fill="#EEF5FB" stroke="#6E8296" stroke-width="1.7"/><path d="M6 23 L7.2 18 L20 5.2 A2.2 2.2 0 0 1 23.2 5 L24.4 6.2 A2.2 2.2 0 0 1 24.2 9.4 L11.4 22.2 Z" fill="#7CC8F0" stroke="#2E6A98" stroke-width="1.3"/><path d="M9.5 19.5 L21.5 7.5" stroke="#2E7AB8" stroke-width="1.2"/><path d="M6 23 L7.2 18 L11.4 22.2 Z" fill="#E4F6FF"/><path d="M6 23.2 H19" stroke="#5A7088" stroke-width="1.3"/></svg>
<div class="a" style="left:145px;top:25px;width:2px;height:17px;background:#1E1A14"></div>
<svg class="a" style="left:152px;top:8px" width="30" height="32" viewBox="0 0 30 32"><path d="M8 6 V2.5 H17 V6" fill="none" stroke="#B84858" stroke-width="1.8"/><rect x="1.5" y="6.5" width="21.5" height="5.5" rx="1" fill="#F4A4AC" stroke="#C04858" stroke-width="1.6"/><path d="M3.8 12 L5.5 28.5 H16" fill="none" stroke="#C04858" stroke-width="1.8"/><path d="M7.5 15 L8.3 25.5 M12.3 15 V25.5 M17 15 V19" stroke="#C04858" stroke-width="1.6"/><circle cx="20.5" cy="24.5" r="5.6" fill="#FFF6EC" stroke="#C04858" stroke-width="1.7"/><path d="M18.3 22.3 L22.7 26.7 M22.7 22.3 L18.3 26.7" stroke="#D03048" stroke-width="1.5"/></svg>
<div class="a td" style="left:211px;top:17px;"><span class="n">9</span></div>
<div class="a td" style="left:283px;top:17px;width:101.5px;text-align:center;"></div>
<div class="a td" style="left:384.5px;top:17px;width:124.5px;text-align:center;">北京联想</div>
<div class="a td" style="left:515px;top:17px;"><span class="n">63</span></div>
<div class="a td" style="left:608px;top:17px;width:178px;text-align:center;"></div>
<div class="a td" style="left:786px;top:17px;width:180px;text-align:center;"></div>
<div class="a td" style="left:972px;top:17px;"><span class="n">HT0000015</span></div>
<div class="a td" style="left:1220.5px;top:17px;">合同分组</div>
<div class="a td" style="left:1346px;top:17px;">人工费</div>
<div class="a td" style="left:1434px;top:17px;">第二机场高速公路</div>
<div class="a td" style="left:1793px;top:17px;">所有部门</div>
<div class="a td" style="left:1907px;top:17px;width:62px;text-align:right;"><span class="n">113.6</span></div>
</div>
<div class="a" style="left:543px;top:497px;width:1967px;height:54px;overflow:hidden">
<div class="a td" style="left:0px;top:17px;width:44.5px;text-align:center;"><span class="n">5</span></div>
<div class="a chk" style="left:55.0px;top:16px"></div>
<svg class="a" style="left:113px;top:10px" width="28" height="26" viewBox="0 0 28 26"><rect x="2.8" y="5.8" width="19.5" height="20" rx="1.5" fill="#EEF5FB" stroke="#6E8296" stroke-width="1.7"/><path d="M6 23 L7.2 18 L20 5.2 A2.2 2.2 0 0 1 23.2 5 L24.4 6.2 A2.2 2.2 0 0 1 24.2 9.4 L11.4 22.2 Z" fill="#7CC8F0" stroke="#2E6A98" stroke-width="1.3"/><path d="M9.5 19.5 L21.5 7.5" stroke="#2E7AB8" stroke-width="1.2"/><path d="M6 23 L7.2 18 L11.4 22.2 Z" fill="#E4F6FF"/><path d="M6 23.2 H19" stroke="#5A7088" stroke-width="1.3"/></svg>
<div class="a" style="left:145px;top:25px;width:2px;height:17px;background:#1E1A14"></div>
<svg class="a" style="left:152px;top:8px" width="30" height="32" viewBox="0 0 30 32"><path d="M8 6 V2.5 H17 V6" fill="none" stroke="#B84858" stroke-width="1.8"/><rect x="1.5" y="6.5" width="21.5" height="5.5" rx="1" fill="#F4A4AC" stroke="#C04858" stroke-width="1.6"/><path d="M3.8 12 L5.5 28.5 H16" fill="none" stroke="#C04858" stroke-width="1.8"/><path d="M7.5 15 L8.3 25.5 M12.3 15 V25.5 M17 15 V19" stroke="#C04858" stroke-width="1.6"/><circle cx="20.5" cy="24.5" r="5.6" fill="#FFF6EC" stroke="#C04858" stroke-width="1.7"/><path d="M18.3 22.3 L22.7 26.7 M22.7 22.3 L18.3 26.7" stroke="#D03048" stroke-width="1.5"/></svg>
<div class="a td" style="left:211px;top:17px;"><span class="n">18</span></div>
<div class="a td" style="left:283px;top:17px;width:101.5px;text-align:center;"><span class="n">60000</span></div>
<div class="a td" style="left:384.5px;top:17px;width:124.5px;text-align:center;"></div>
<div class="a td" style="left:515px;top:17px;"><span class="n">41</span></div>
<div class="a td" style="left:608px;top:17px;width:178px;text-align:center;"><span class="n">HT20230406003</span></div>
<div class="a td" style="left:786px;top:17px;width:180px;text-align:center;">华南快速扩建工程</div>
<div class="a td" style="left:972px;top:17px;"><span class="n">HT0000020</span></div>
<div class="a td" style="left:1220.5px;top:17px;">普通用户工程</div>
<div class="a td" style="left:1346px;top:17px;">人工费</div>
<div class="a td" style="left:1434px;top:17px;">广连高速一期</div>
<div class="a td" style="left:1793px;top:17px;"></div>
<div class="a td" style="left:1907px;top:17px;width:62px;text-align:right;"><span class="n">10</span></div>
</div>
<div class="a" style="left:543px;top:551px;width:1967px;height:54px;overflow:hidden">
<div class="a td" style="left:0px;top:17px;width:44.5px;text-align:center;"><span class="n">6</span></div>
<div class="a chk" style="left:55.0px;top:16px"></div>
<svg class="a" style="left:113px;top:10px" width="28" height="26" viewBox="0 0 28 26"><rect x="2.8" y="5.8" width="19.5" height="20" rx="1.5" fill="#EEF5FB" stroke="#6E8296" stroke-width="1.7"/><path d="M6 23 L7.2 18 L20 5.2 A2.2 2.2 0 0 1 23.2 5 L24.4 6.2 A2.2 2.2 0 0 1 24.2 9.4 L11.4 22.2 Z" fill="#7CC8F0" stroke="#2E6A98" stroke-width="1.3"/><path d="M9.5 19.5 L21.5 7.5" stroke="#2E7AB8" stroke-width="1.2"/><path d="M6 23 L7.2 18 L11.4 22.2 Z" fill="#E4F6FF"/><path d="M6 23.2 H19" stroke="#5A7088" stroke-width="1.3"/></svg>
<div class="a" style="left:145px;top:25px;width:2px;height:17px;background:#1E1A14"></div>
<svg class="a" style="left:152px;top:8px" width="30" height="32" viewBox="0 0 30 32"><path d="M8 6 V2.5 H17 V6" fill="none" stroke="#B84858" stroke-width="1.8"/><rect x="1.5" y="6.5" width="21.5" height="5.5" rx="1" fill="#F4A4AC" stroke="#C04858" stroke-width="1.6"/><path d="M3.8 12 L5.5 28.5 H16" fill="none" stroke="#C04858" stroke-width="1.8"/><path d="M7.5 15 L8.3 25.5 M12.3 15 V25.5 M17 15 V19" stroke="#C04858" stroke-width="1.6"/><circle cx="20.5" cy="24.5" r="5.6" fill="#FFF6EC" stroke="#C04858" stroke-width="1.7"/><path d="M18.3 22.3 L22.7 26.7 M22.7 22.3 L18.3 26.7" stroke="#D03048" stroke-width="1.5"/></svg>
<div class="a td" style="left:211px;top:17px;"><span class="n">19</span></div>
<div class="a td" style="left:283px;top:17px;width:101.5px;text-align:center;"><span class="n">60000</span></div>
<div class="a td" style="left:384.5px;top:17px;width:124.5px;text-align:center;"></div>
<div class="a td" style="left:515px;top:17px;"><span class="n">41</span></div>
<div class="a td" style="left:608px;top:17px;width:178px;text-align:center;"><span class="n">HT20230406003</span></div>
<div class="a td" style="left:786px;top:17px;width:180px;text-align:center;">华南快速扩建工程</div>
<div class="a td" style="left:972px;top:17px;"><span class="n">HT0000025</span></div>
<div class="a td" style="left:1220.5px;top:17px;">普通用户工程</div>
<div class="a td" style="left:1346px;top:17px;">人工费</div>
<div class="a td" style="left:1434px;top:17px;">广连高速二期</div>
<div class="a td" style="left:1793px;top:17px;"></div>
<div class="a td" style="left:1907px;top:17px;width:62px;text-align:right;"><span class="n">2.5</span></div>
</div>
<div class="a" style="left:543px;top:605px;width:1967px;height:54px;overflow:hidden">
<div class="a td" style="left:0px;top:17px;width:44.5px;text-align:center;"><span class="n">7</span></div>
<div class="a chk" style="left:55.0px;top:16px"></div>
<svg class="a" style="left:113px;top:10px" width="28" height="26" viewBox="0 0 28 26"><rect x="2.8" y="5.8" width="19.5" height="20" rx="1.5" fill="#EEF5FB" stroke="#6E8296" stroke-width="1.7"/><path d="M6 23 L7.2 18 L20 5.2 A2.2 2.2 0 0 1 23.2 5 L24.4 6.2 A2.2 2.2 0 0 1 24.2 9.4 L11.4 22.2 Z" fill="#7CC8F0" stroke="#2E6A98" stroke-width="1.3"/><path d="M9.5 19.5 L21.5 7.5" stroke="#2E7AB8" stroke-width="1.2"/><path d="M6 23 L7.2 18 L11.4 22.2 Z" fill="#E4F6FF"/><path d="M6 23.2 H19" stroke="#5A7088" stroke-width="1.3"/></svg>
<div class="a" style="left:145px;top:25px;width:2px;height:17px;background:#1E1A14"></div>
<svg class="a" style="left:152px;top:8px" width="30" height="32" viewBox="0 0 30 32"><path d="M8 6 V2.5 H17 V6" fill="none" stroke="#B84858" stroke-width="1.8"/><rect x="1.5" y="6.5" width="21.5" height="5.5" rx="1" fill="#F4A4AC" stroke="#C04858" stroke-width="1.6"/><path d="M3.8 12 L5.5 28.5 H16" fill="none" stroke="#C04858" stroke-width="1.8"/><path d="M7.5 15 L8.3 25.5 M12.3 15 V25.5 M17 15 V19" stroke="#C04858" stroke-width="1.6"/><circle cx="20.5" cy="24.5" r="5.6" fill="#FFF6EC" stroke="#C04858" stroke-width="1.7"/><path d="M18.3 22.3 L22.7 26.7 M22.7 22.3 L18.3 26.7" stroke="#D03048" stroke-width="1.5"/></svg>
<div class="a td" style="left:211px;top:17px;"><span class="n">33</span></div>
<div class="a td" style="left:283px;top:17px;width:101.5px;text-align:center;"></div>
<div class="a td" style="left:384.5px;top:17px;width:124.5px;text-align:center;"></div>
<div class="a td" style="left:515px;top:17px;"><span class="n">43</span></div>
<div class="a td" style="left:608px;top:17px;width:178px;text-align:center;"></div>
<div class="a td" style="left:786px;top:17px;width:180px;text-align:center;"></div>
<div class="a td" style="left:972px;top:17px;"><span class="n">HT0000033</span></div>
<div class="a td" style="left:1220.5px;top:17px;">招投标工程</div>
<div class="a td" style="left:1346px;top:17px;">人工费</div>
<div class="a td" style="left:1434px;top:17px;">分包合同</div>
<div class="a td" style="left:1793px;top:17px;"></div>
<div class="a td" style="left:1907px;top:17px;width:62px;text-align:right;"></div>
</div>
<div class="a" style="left:543px;top:659px;width:1967px;height:54px;overflow:hidden">
<div class="a td" style="left:0px;top:17px;width:44.5px;text-align:center;"><span class="n">8</span></div>
<div class="a chk" style="left:55.0px;top:16px"></div>
<svg class="a" style="left:113px;top:10px" width="28" height="26" viewBox="0 0 28 26"><rect x="2.8" y="5.8" width="19.5" height="20" rx="1.5" fill="#EEF5FB" stroke="#6E8296" stroke-width="1.7"/><path d="M6 23 L7.2 18 L20 5.2 A2.2 2.2 0 0 1 23.2 5 L24.4 6.2 A2.2 2.2 0 0 1 24.2 9.4 L11.4 22.2 Z" fill="#7CC8F0" stroke="#2E6A98" stroke-width="1.3"/><path d="M9.5 19.5 L21.5 7.5" stroke="#2E7AB8" stroke-width="1.2"/><path d="M6 23 L7.2 18 L11.4 22.2 Z" fill="#E4F6FF"/><path d="M6 23.2 H19" stroke="#5A7088" stroke-width="1.3"/></svg>
<div class="a" style="left:145px;top:25px;width:2px;height:17px;background:#1E1A14"></div>
<svg class="a" style="left:152px;top:8px" width="30" height="32" viewBox="0 0 30 32"><path d="M8 6 V2.5 H17 V6" fill="none" stroke="#B84858" stroke-width="1.8"/><rect x="1.5" y="6.5" width="21.5" height="5.5" rx="1" fill="#F4A4AC" stroke="#C04858" stroke-width="1.6"/><path d="M3.8 12 L5.5 28.5 H16" fill="none" stroke="#C04858" stroke-width="1.8"/><path d="M7.5 15 L8.3 25.5 M12.3 15 V25.5 M17 15 V19" stroke="#C04858" stroke-width="1.6"/><circle cx="20.5" cy="24.5" r="5.6" fill="#FFF6EC" stroke="#C04858" stroke-width="1.7"/><path d="M18.3 22.3 L22.7 26.7 M22.7 22.3 L18.3 26.7" stroke="#D03048" stroke-width="1.5"/></svg>
<div class="a td" style="left:211px;top:17px;"><span class="n">29</span></div>
<div class="a td" style="left:283px;top:17px;width:101.5px;text-align:center;"><span class="n">10000</span></div>
<div class="a td" style="left:384.5px;top:17px;width:124.5px;text-align:center;">中兴通讯</div>
<div class="a td" style="left:515px;top:17px;"><span class="n">36</span></div>
<div class="a td" style="left:608px;top:17px;width:178px;text-align:center;"><span class="n">HT0000003</span></div>
<div class="a td" style="left:786px;top:17px;width:180px;text-align:center;">沈海高速工程</div>
<div class="a td" style="left:972px;top:17px;"><span class="n">HT0000034</span></div>
<div class="a td" style="left:1220.5px;top:17px;">销售合同</div>
<div class="a td" style="left:1346px;top:17px;">人工费</div>
<div class="a td" style="left:1434px;top:17px;">劳务合同<span class="n">3</span></div>
<div class="a td" style="left:1793px;top:17px;">工程部</div>
<div class="a td" style="left:1907px;top:17px;width:62px;text-align:right;"><span class="n">20</span></div>
</div>
<div class="a" style="left:543px;top:713px;width:1967px;height:54px;overflow:hidden">
<div class="a td" style="left:0px;top:17px;width:44.5px;text-align:center;"><span class="n">9</span></div>
<div class="a chk" style="left:55.0px;top:16px"></div>
<svg class="a" style="left:113px;top:10px" width="28" height="26" viewBox="0 0 28 26"><rect x="2.8" y="5.8" width="19.5" height="20" rx="1.5" fill="#EEF5FB" stroke="#6E8296" stroke-width="1.7"/><path d="M6 23 L7.2 18 L20 5.2 A2.2 2.2 0 0 1 23.2 5 L24.4 6.2 A2.2 2.2 0 0 1 24.2 9.4 L11.4 22.2 Z" fill="#7CC8F0" stroke="#2E6A98" stroke-width="1.3"/><path d="M9.5 19.5 L21.5 7.5" stroke="#2E7AB8" stroke-width="1.2"/><path d="M6 23 L7.2 18 L11.4 22.2 Z" fill="#E4F6FF"/><path d="M6 23.2 H19" stroke="#5A7088" stroke-width="1.3"/></svg>
<div class="a" style="left:145px;top:25px;width:2px;height:17px;background:#1E1A14"></div>
<svg class="a" style="left:152px;top:8px" width="30" height="32" viewBox="0 0 30 32"><path d="M8 6 V2.5 H17 V6" fill="none" stroke="#B84858" stroke-width="1.8"/><rect x="1.5" y="6.5" width="21.5" height="5.5" rx="1" fill="#F4A4AC" stroke="#C04858" stroke-width="1.6"/><path d="M3.8 12 L5.5 28.5 H16" fill="none" stroke="#C04858" stroke-width="1.8"/><path d="M7.5 15 L8.3 25.5 M12.3 15 V25.5 M17 15 V19" stroke="#C04858" stroke-width="1.6"/><circle cx="20.5" cy="24.5" r="5.6" fill="#FFF6EC" stroke="#C04858" stroke-width="1.7"/><path d="M18.3 22.3 L22.7 26.7 M22.7 22.3 L18.3 26.7" stroke="#D03048" stroke-width="1.5"/></svg>
<div class="a td" style="left:211px;top:17px;"><span class="n">30</span></div>
<div class="a td" style="left:283px;top:17px;width:101.5px;text-align:center;"><span class="n">60000</span></div>
<div class="a td" style="left:384.5px;top:17px;width:124.5px;text-align:center;"></div>
<div class="a td" style="left:515px;top:17px;"><span class="n">41</span></div>
<div class="a td" style="left:608px;top:17px;width:178px;text-align:center;"><span class="n">HT20230406003</span></div>
<div class="a td" style="left:786px;top:17px;width:180px;text-align:center;">华南快速扩建工程</div>
<div class="a td" style="left:972px;top:17px;"><span class="n">HT0000035</span></div>
<div class="a td" style="left:1220.5px;top:17px;">普通用户工程</div>
<div class="a td" style="left:1346px;top:17px;">材料费</div>
<div class="a td" style="left:1434px;top:17px;">材料采购合同</div>
<div class="a td" style="left:1793px;top:17px;"></div>
<div class="a td" style="left:1907px;top:17px;width:62px;text-align:right;"><span class="n">8.333</span></div>
</div>
<div class="a" style="left:543px;top:767px;width:1967px;height:32px;overflow:hidden">
<div class="a td" style="left:0px;top:17px;width:44.5px;text-align:center;"><span class="n">10</span></div>
<div class="a chk" style="left:55.0px;top:16px"></div>
<svg class="a" style="left:113px;top:10px" width="28" height="26" viewBox="0 0 28 26"><rect x="2.8" y="5.8" width="19.5" height="20" rx="1.5" fill="#EEF5FB" stroke="#6E8296" stroke-width="1.7"/><path d="M6 23 L7.2 18 L20 5.2 A2.2 2.2 0 0 1 23.2 5 L24.4 6.2 A2.2 2.2 0 0 1 24.2 9.4 L11.4 22.2 Z" fill="#7CC8F0" stroke="#2E6A98" stroke-width="1.3"/><path d="M9.5 19.5 L21.5 7.5" stroke="#2E7AB8" stroke-width="1.2"/><path d="M6 23 L7.2 18 L11.4 22.2 Z" fill="#E4F6FF"/><path d="M6 23.2 H19" stroke="#5A7088" stroke-width="1.3"/></svg>
<div class="a" style="left:145px;top:25px;width:2px;height:17px;background:#1E1A14"></div>
<svg class="a" style="left:152px;top:8px" width="30" height="32" viewBox="0 0 30 32"><path d="M8 6 V2.5 H17 V6" fill="none" stroke="#B84858" stroke-width="1.8"/><rect x="1.5" y="6.5" width="21.5" height="5.5" rx="1" fill="#F4A4AC" stroke="#C04858" stroke-width="1.6"/><path d="M3.8 12 L5.5 28.5 H16" fill="none" stroke="#C04858" stroke-width="1.8"/><path d="M7.5 15 L8.3 25.5 M12.3 15 V25.5 M17 15 V19" stroke="#C04858" stroke-width="1.6"/><circle cx="20.5" cy="24.5" r="5.6" fill="#FFF6EC" stroke="#C04858" stroke-width="1.7"/><path d="M18.3 22.3 L22.7 26.7 M22.7 22.3 L18.3 26.7" stroke="#D03048" stroke-width="1.5"/></svg>
<div class="a td" style="left:211px;top:17px;"><span class="n">42</span></div>
<div class="a td" style="left:283px;top:17px;width:101.5px;text-align:center;"><span class="n">10000</span></div>
<div class="a td" style="left:384.5px;top:17px;width:124.5px;text-align:center;">中兴通讯</div>
<div class="a td" style="left:515px;top:17px;"><span class="n">36</span></div>
<div class="a td" style="left:608px;top:17px;width:178px;text-align:center;"><span class="n">HT0000003</span></div>
<div class="a td" style="left:786px;top:17px;width:180px;text-align:center;">沈海高速工程</div>
<div class="a td" style="left:972px;top:17px;"><span class="n">HT20260223001</span></div>
<div class="a td" style="left:1220.5px;top:17px;">采购合同</div>
<div class="a td" style="left:1346px;top:17px;">材料费</div>
<div class="a td" style="left:1434px;top:17px;">购买材料</div>
<div class="a td" style="left:1793px;top:17px;"></div>
<div class="a td" style="left:1907px;top:17px;width:62px;text-align:right;"><span class="n">50</span></div>
</div>
<div class="a" style="left:587px;top:799px;width:1934px;height:12px;background:#F4F5F7;border-bottom:1px solid #E8E4E0"></div>
<div class="a sb" style="left:588px;top:799px;width:805px;height:12px"></div>
<div class="a sb" style="left:2511px;top:282px;width:10px;height:450px"></div>
<div class="a" style="left:587px;top:811px;width:1934px;height:54px;background:#FFF6EC"></div>
<div class="a" style="left:587.5px;top:811px;width:0;height:54px;border-left:1px dotted #D2CCC4"></div>
<div class="a" style="left:629.5px;top:811px;width:0;height:54px;border-left:1px dotted #D2CCC4"></div>
<div class="a" style="left:748px;top:811px;width:0;height:54px;border-left:1px dotted #D2CCC4"></div>
<div class="a" style="left:826px;top:811px;width:0;height:54px;border-left:1px dotted #D2CCC4"></div>
<div class="a" style="left:927.5px;top:811px;width:0;height:54px;border-left:1px dotted #D2CCC4"></div>
<div class="a" style="left:1052px;top:811px;width:0;height:54px;border-left:1px dotted #D2CCC4"></div>
<div class="a" style="left:1151px;top:811px;width:0;height:54px;border-left:1px dotted #D2CCC4"></div>
<div class="a" style="left:1329px;top:811px;width:0;height:54px;border-left:1px dotted #D2CCC4"></div>
<div class="a" style="left:1509px;top:811px;width:0;height:54px;border-left:1px dotted #D2CCC4"></div>
<div class="a" style="left:1757.5px;top:811px;width:0;height:54px;border-left:1px dotted #D2CCC4"></div>
<div class="a" style="left:1883px;top:811px;width:0;height:54px;border-left:1px dotted #D2CCC4"></div>
<div class="a" style="left:1971px;top:811px;width:0;height:54px;border-left:1px dotted #D2CCC4"></div>
<div class="a" style="left:2330px;top:811px;width:0;height:54px;border-left:1px dotted #D2CCC4"></div>
<div class="a" style="left:2450px;top:811px;width:0;height:54px;border-left:1px dotted #D2CCC4"></div>
<div class="a" style="left:543px;top:865px;width:1978px;height:0;border-top:1px dotted #C8C0B8"></div>
<div class="a td" style="left:670px;top:828px;color:#1A1ACC;text-decoration:underline">合计</div>
<div class="a td" style="left:755px;top:828px">总计:</div>
<div class="a" style="left:543px;top:866px;width:1978px;height:47px;background:#F3F3F3;border-bottom:1px solid #F0D8C8"></div>
<div class="a" style="left:552px;top:875px;width:75px;height:29px;background:#fff;border:1px solid #9DB0CC"></div>
<div class="a" style="left:561px;top:877px;font-size:20px;color:#111">20</div>
<svg class="a" style="left:603px;top:884px" width="13" height="9" viewBox="0 0 13 9"><path d="M1 1 L6.5 7 L12 1" fill="none" stroke="#111" stroke-width="2"/></svg>
<div class="a" style="left:638px;top:871px;width:1px;height:36px;background:#D8D8D8;border-right:1px solid #fff"></div>
<div class="a" style="left:767px;top:871px;width:1px;height:36px;background:#D8D8D8;border-right:1px solid #fff"></div>
<div class="a" style="left:901px;top:871px;width:1px;height:36px;background:#D8D8D8;border-right:1px solid #fff"></div>
<div class="a" style="left:1031px;top:871px;width:1px;height:36px;background:#D8D8D8;border-right:1px solid #fff"></div>
<div class="a" style="left:641px;top:869px;width:60px;height:39px;border-radius:5px;background:#F1F2F4;box-shadow:0 0 0 1px #EAEAEA"></div>
<div class="a" style="left:704px;top:869px;width:60px;height:39px;border-radius:5px;background:#F1F2F4;box-shadow:0 0 0 1px #EAEAEA"></div>
<div class="a" style="left:904px;top:869px;width:60px;height:39px;border-radius:5px;background:#F1F2F4;box-shadow:0 0 0 1px #EAEAEA"></div>
<div class="a" style="left:966px;top:869px;width:60px;height:39px;border-radius:5px;background:#F1F2F4;box-shadow:0 0 0 1px #EAEAEA"></div>
<div class="a" style="left:1033px;top:869px;width:60px;height:39px;border-radius:5px;background:#F1F2F4;box-shadow:0 0 0 1px #EAEAEA"></div>
<svg class="a" style="left:665px;top:879px" width="15" height="16" viewBox="0 0 15 16"><rect x="0" y="0" width="3" height="16" fill="#80C0EC"/><path d="M14 0 L14 16 L4 8 Z" fill="#80C0EC"/></svg>
<svg class="a" style="left:727px;top:879px" width="11" height="16" viewBox="0 0 11 16"><path d="M10 0 L10 16 L0 8 Z" fill="#80C0EC"/></svg>
<svg class="a" style="left:929px;top:879px" width="11" height="16" viewBox="0 0 11 16"><path d="M0 0 L0 16 L10 8 Z" fill="#80C0EC"/></svg>
<svg class="a" style="left:990px;top:879px" width="15" height="16" viewBox="0 0 15 16"><path d="M0 0 L0 16 L10 8 Z" fill="#80C0EC"/><rect x="12" y="0" width="3" height="16" fill="#80C0EC"/></svg>
<svg class="a" style="left:1055px;top:877px" width="17" height="18" viewBox="0 0 17 18"><path d="M13.5 5.5 A6.5 6.5 0 1 1 8.5 3" fill="none" stroke="#3A9AE0" stroke-width="3"/><path d="M7 0 L12 3 L7 7 Z" fill="#3A9AE0"/></svg>
<div class="a" style="left:779px;top:877px;font-size:18px;color:#222">第</div>
<div class="a" style="left:800px;top:874px;width:40px;height:30px;background:#fff;border:1px solid #A8BCD8"></div>
<div class="a" style="left:805px;top:877px;font-size:20px;color:#111">1</div>
<div class="a" style="left:843px;top:877px;font-size:18px;color:#222">共<span class="n">1</span>页</div>
<div class="a" style="left:2343px;top:877px;font-size:18px;color:#222">显示<span class="n">1</span>到<span class="n">11,</span>共<span class="n">11</span>记录</div>
<div class="a" style="left:543px;top:932px;width:2002px;height:10px;background:#E2E5EC;border-radius:0 6px 0 0"></div>
<div class="a" style="left:535px;top:919px;width:8px;height:453px;background:#E2E5EE"></div>
<div class="a" style="left:543px;top:985px;width:1995px;height:3px;background:#E0E4EC"></div>
<div class="a" style="left:544.0px;top:945px;width:119px;height:40px;background:#FF8000;border-radius:10px 10px 0 0"></div>
<div class="a" style="left:544.0px;top:958px;width:119px;text-align:center;font-size:20px;color:#fff;font-weight:bold;-webkit-text-stroke:0.4px #fff">合同付款</div>
<div class="a" style="left:662.6px;top:945px;width:118px;height:42px;background:#FFF6EC;border:1px solid #F0A050;border-bottom:none;border-radius:10px 10px 0 0"></div>
<div class="a" style="left:662.6px;top:958px;width:118px;text-align:center;font-size:20px;color:#E08A30">合同变更</div>
<div class="a" style="left:781.2px;top:945px;width:118px;height:42px;background:#FFF6EC;border:1px solid #F0A050;border-bottom:none;border-radius:10px 10px 0 0"></div>
<div class="a" style="left:781.2px;top:958px;width:118px;text-align:center;font-size:20px;color:#E08A30">合同结算</div>
<div class="a" style="left:899.8px;top:945px;width:118px;height:42px;background:#FFF6EC;border:1px solid #F0A050;border-bottom:none;border-radius:10px 10px 0 0"></div>
<div class="a" style="left:899.8px;top:958px;width:118px;text-align:center;font-size:20px;color:#E08A30">印章管理</div>
<div class="a" style="left:1018.4px;top:945px;width:118px;height:42px;background:#FFF6EC;border:1px solid #F0A050;border-bottom:none;border-radius:10px 10px 0 0"></div>
<div class="a" style="left:1018.4px;top:958px;width:118px;text-align:center;font-size:20px;color:#E08A30">资质管理</div>
<div class="a" style="left:1137.0px;top:945px;width:118px;height:42px;background:#FFF6EC;border:1px solid #F0A050;border-bottom:none;border-radius:10px 10px 0 0"></div>
<div class="a" style="left:1137.0px;top:958px;width:118px;text-align:center;font-size:20px;color:#E08A30">合同附件</div>
<div class="a" style="left:1255.6px;top:945px;width:118px;height:42px;background:#FFF6EC;border:1px solid #F0A050;border-bottom:none;border-radius:10px 10px 0 0"></div>
<div class="a" style="left:1255.6px;top:958px;width:118px;text-align:center;font-size:20px;color:#E08A30">收付计划</div>
<div class="a" style="left:1374.1999999999998px;top:945px;width:118px;height:42px;background:#FFF6EC;border:1px solid #F0A050;border-bottom:none;border-radius:10px 10px 0 0"></div>
<div class="a" style="left:1374.1999999999998px;top:958px;width:118px;text-align:center;font-size:20px;color:#E08A30">合同明细</div>
<div class="a" style="left:1492.8px;top:945px;width:118px;height:42px;background:#FFF6EC;border:1px solid #F0A050;border-bottom:none;border-radius:10px 10px 0 0"></div>
<div class="a" style="left:1492.8px;top:958px;width:118px;text-align:center;font-size:20px;color:#E08A30">合同发票</div>
<div class="a" style="left:1611.3999999999999px;top:945px;width:118px;height:42px;background:#FFF6EC;border:1px solid #F0A050;border-bottom:none;border-radius:10px 10px 0 0"></div>
<div class="a" style="left:1611.3999999999999px;top:958px;width:118px;text-align:center;font-size:20px;color:#E08A30">合同提醒</div>
<div class="a" style="left:1730.0px;top:945px;width:118px;height:42px;background:#FFF6EC;border:1px solid #F0A050;border-bottom:none;border-radius:10px 10px 0 0"></div>
<div class="a" style="left:1730.0px;top:958px;width:118px;text-align:center;font-size:20px;color:#E08A30">合同收付</div>
<div class="a" style="left:1848.6px;top:945px;width:118px;height:42px;background:#FFF6EC;border:1px solid #F0A050;border-bottom:none;border-radius:10px 10px 0 0"></div>
<div class="a" style="left:1848.6px;top:958px;width:118px;text-align:center;font-size:20px;color:#E08A30">进度管理</div>
<div class="a sb" style="left:2529px;top:942px;width:11px;height:29px"></div>
<div class="a" style="left:543px;top:1367px;width:1995px;height:5px;border-top:1px solid #E8E4E4;border-bottom:1px solid #E8E4E4"></div>
<div class="a sb" style="left:2545px;top:120px;width:12px;height:1250px"></div>
<div class="a" style="left:0;top:1371px;width:2559px;height:5px;background:linear-gradient(#E4E8F0,#F2F4F8)"></div>
<div class="a" style="left:2541px;top:120px;width:1px;height:1251px;background:#ECE8E8"></div>
</body></html>
